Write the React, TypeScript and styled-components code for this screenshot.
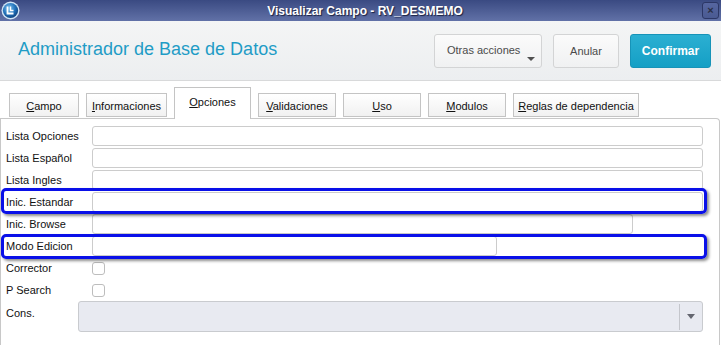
import React from "react";
import styled, { createGlobalStyle } from "styled-components";

const GlobalStyle = createGlobalStyle`
  html, body {
    margin: 0;
    padding: 0;
    background: #ffffff;
  }
  body {
    font-family: "Liberation Sans", Arial, sans-serif;
    overflow: hidden;
  }
`;

const Window = styled.div`
  width: 721px;
  height: 345px;
  display: flex;
  flex-direction: column;
  background: #ffffff;
  overflow: hidden;
`;

const TitleBar = styled.div`
  height: 21px;
  flex-shrink: 0;
  display: flex;
  align-items: center;
  justify-content: space-between;
  padding: 0 2px 0 1px;
  background: linear-gradient(#3a4a82, #6171a7);
`;

const WindowTitle = styled.span`
  flex: 1;
  text-align: center;
  color: #ffffff;
  font-weight: bold;
  font-size: 12px;
  text-shadow: 1px 1px 1px #1a2040;
  padding-left: 8px;
`;

const CloseBtn = styled.div`
  width: 15px;
  height: 15px;
  border: 1px solid #2c3766;
  border-radius: 3px;
  background: linear-gradient(#5666a0, #4a5a92);
  display: flex;
  align-items: center;
  justify-content: center;
  color: #2a2f45;
  font-size: 11px;
  font-weight: bold;
  line-height: 1;
`;

const Header = styled.header`
  height: 59px;
  flex-shrink: 0;
  display: flex;
  align-items: center;
  justify-content: space-between;
  padding: 0 10px 0 18px;
  background: linear-gradient(#f4f5f5, #eceef0);
  border-bottom: 1px solid #d8d9da;
`;

const AppTitle = styled.h1`
  margin: 0;
  font-weight: normal;
  font-size: 18px;
  color: #1f9cc6;
  padding-bottom: 2px;
`;

const Actions = styled.div`
  display: flex;
  gap: 11px;
  align-items: center;
`;

const Button = styled.button<{ $primary?: boolean; $w: number; $menu?: boolean }>`
  position: relative;
  width: ${(p) => p.$w}px;
  height: 34px;
  border-radius: 3px;
  font-family: "Liberation Sans", Arial, sans-serif;
  font-size: ${(p) => (p.$primary ? 12 : 11)}px;
  cursor: pointer;
  border: 1px solid ${(p) => (p.$primary ? "#1793b8" : "#d3d4d5")};
  background: ${(p) =>
    p.$primary ? "linear-gradient(#2bafd2, #159fc5)" : "linear-gradient(#fbfbfb, #f0f1f2)"};
  color: ${(p) => (p.$primary ? "#ffffff" : "#4a4a4a")};
  font-weight: ${(p) => (p.$primary ? "bold" : "normal")};
  text-align: ${(p) => (p.$menu ? "left" : "center")};
  padding: ${(p) => (p.$menu ? "0 0 2px 12px" : "0")};
`;

const Caret = styled.span`
  position: absolute;
  right: 6px;
  bottom: 6px;
  width: 0;
  height: 0;
  border-left: 4px solid transparent;
  border-right: 4px solid transparent;
  border-top: 4px solid #505050;
`;

const TabBar = styled.div`
  display: flex;
  align-items: flex-end;
  gap: 7px;
  height: 37px;
  padding: 0 0 0 9px;
  flex-shrink: 0;
`;

const Tab = styled.div<{ $active?: boolean; $w: number }>`
  width: ${(p) => p.$w}px;
  height: ${(p) => (p.$active ? 32 : 24)}px;
  box-sizing: border-box;
  display: flex;
  align-items: ${(p) => (p.$active ? "flex-start" : "center")};
  justify-content: center;
  padding-top: ${(p) => (p.$active ? 8 : 1)}px;
  font-size: 11px;
  color: #111111;
  border: 1px solid #c4c4c4;
  border-bottom: ${(p) => (p.$active ? "none" : "1px solid #c4c4c4")};
  background: ${(p) => (p.$active ? "#ffffff" : "linear-gradient(#ffffff, #f1f1f1)")};
  margin-bottom: ${(p) => (p.$active ? -1 : 1)}px;
  position: relative;
  z-index: ${(p) => (p.$active ? 2 : 1)};

  u {
    text-decoration: underline;
  }
`;

const Panel = styled.section`
  flex: 1;
  margin-right: 1px;
  border: 1px solid #c8c8c8;
  border-bottom: none;
  border-top-right-radius: 4px;
  display: flex;
  flex-direction: column;
  padding: 6px 16px 0 5px;
  position: relative;
  z-index: 1;
`;

const Row = styled.div<{ $tall?: boolean }>`
  position: relative;
  display: flex;
  align-items: ${(p) => (p.$tall ? "flex-start" : "center")};
  height: ${(p) => (p.$tall ? 32 : 22)}px;
  flex-shrink: 0;
`;

const Label = styled.label<{ $w?: number; $top?: number }>`
  width: ${(p) => p.$w ?? 86}px;
  flex-shrink: 0;
  font-size: 11px;
  color: #111111;
  padding-top: ${(p) => p.$top ?? 0}px;
`;

const Input = styled.div<{ $w?: number }>`
  height: 20px;
  box-sizing: border-box;
  ${(p) => (p.$w ? `width: ${p.$w}px;` : "flex: 1;")}
  border: 1px solid #cccccc;
  border-radius: 3px;
  background: #ffffff;
`;

const Check = styled.div`
  width: 13px;
  height: 13px;
  box-sizing: border-box;
  border: 1px solid #bdbdbd;
  border-radius: 3px;
  background: #ffffff;
`;

const Select = styled.div`
  flex: 1;
  height: 31px;
  box-sizing: border-box;
  border: 1px solid #c9cbcf;
  border-radius: 3px;
  background: #e8eaf1;
  display: flex;
  justify-content: flex-end;
  align-items: center;
`;

const SelectArrow = styled.div`
  width: 22px;
  height: 26px;
  border-left: 1px solid #c4c6cc;
  display: flex;
  align-items: center;
  justify-content: center;

  &::after {
    content: "";
    border-left: 4px solid transparent;
    border-right: 4px solid transparent;
    border-top: 5px solid #646670;
  }
`;

const Highlight = styled.div<{ $top: number; $bottom: number }>`
  position: absolute;
  left: -5px;
  right: -4px;
  top: ${(p) => p.$top}px;
  bottom: ${(p) => p.$bottom}px;
  border: 3px solid #0a10e8;
  border-radius: 5px;
  box-shadow: 2px 2px 3px rgba(0, 0, 0, 0.45);
  pointer-events: none;
  z-index: 3;
`;

const Logo = () => (
  <svg width="19" height="19" viewBox="0 0 19 19">
    <defs>
      <radialGradient id="lg" cx="0.4" cy="0.35" r="0.7">
        <stop offset="0" stopColor="#7fc4f0" />
        <stop offset="0.6" stopColor="#1f6fb8" />
        <stop offset="1" stopColor="#0d3c78" />
      </radialGradient>
    </defs>
    <circle cx="9.5" cy="9.5" r="9" fill="#cfe3f5" />
    <circle cx="9.5" cy="9.5" r="7.6" fill="url(#lg)" />
    <path d="M6.5 5.5v7h6" stroke="#ffffff" strokeWidth="1.8" fill="none" />
    <path d="M9.5 5.5v4h3" stroke="#ffffff" strokeWidth="1.4" fill="none" />
  </svg>
);

const tabs = [
  { key: "C", rest: "ampo", w: 70 },
  { key: "I", rest: "nformaciones", w: 81 },
  { key: "O", rest: "pciones", w: 77, active: true },
  { key: "V", rest: "alidaciones", w: 78 },
  { key: "U", rest: "so", w: 78 },
  { key: "M", rest: "odulos", w: 78 },
  { key: "R", rest: "eglas de dependencia", w: 126 },
];

const App = () => {
  return (
    <Window>
      <GlobalStyle />
      <TitleBar>
        <Logo />
        <WindowTitle>Visualizar Campo - RV_DESMEMO</WindowTitle>
        <CloseBtn>×</CloseBtn>
      </TitleBar>

      <Header>
        <AppTitle>Administrador de Base de Datos</AppTitle>
        <Actions>
          <Button $w={108} $menu>
            Otras acciones
            <Caret />
          </Button>
          <Button $w={66}>Anular</Button>
          <Button $w={81} $primary>
            Confirmar
          </Button>
        </Actions>
      </Header>

      <TabBar>
        {tabs.map((t) => (
          <Tab key={t.key} $w={t.w} $active={t.active}>
            <span>
              <u>{t.key}</u>
              {t.rest}
            </span>
          </Tab>
        ))}
      </TabBar>

      <Panel>
        <Row>
          <Label>Lista Opciones</Label>
          <Input />
        </Row>
        <Row>
          <Label>Lista Español</Label>
          <Input />
        </Row>
        <Row>
          <Label>Lista Ingles</Label>
          <Input />
        </Row>
        <Row>
          <Label>Inic. Estandar</Label>
          <Input />
          <Highlight $top={-3} $bottom={-1} />
        </Row>
        <Row>
          <Label>Inic. Browse</Label>
          <Input $w={541} />
        </Row>
        <Row>
          <Label>Modo Edicion</Label>
          <Input $w={405} />
          <Highlight $top={-1} $bottom={-2} />
        </Row>
        <Row>
          <Label>Corrector</Label>
          <Check />
        </Row>
        <Row>
          <Label>P Search</Label>
          <Check />
        </Row>
        <Row $tall>
          <Label $w={72} $top={6}>
            Cons.
          </Label>
          <Select>
            <SelectArrow />
          </Select>
        </Row>
      </Panel>
    </Window>
  );
};

export default App;
